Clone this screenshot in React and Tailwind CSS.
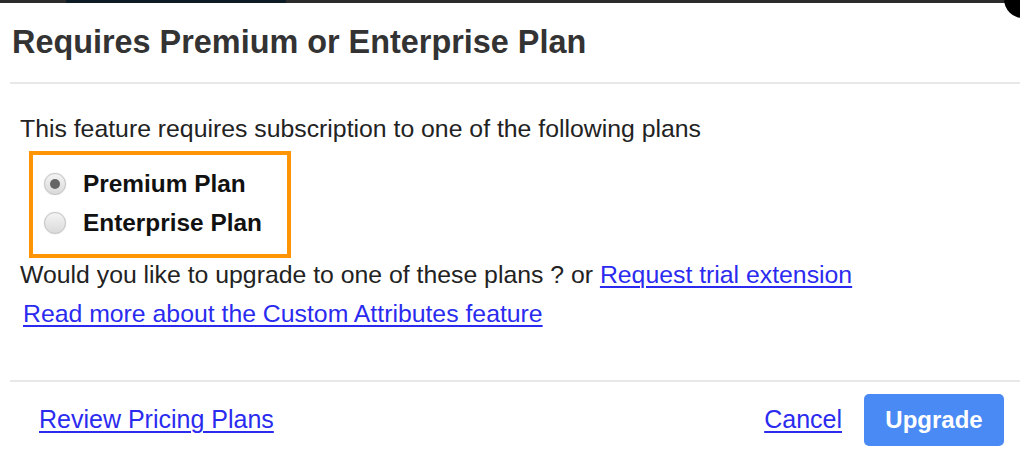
import React, { useState } from "react";

const links = "text-[#2b2bef] underline underline-offset-[3px] decoration-[1.5px]";

const App = () => {
  const [plan, setPlan] = useState("premium");

  return (
    <div className="relative w-[1020px] h-[465px] overflow-hidden bg-white font-['Liberation_Sans',Arial,sans-serif] text-[#222]">
      {/* strip of the page behind the dialog */}
      <div className="flex h-[3px]">
        <div className="w-[66px] bg-[#2b2b2b]" />
        <div className="w-[220px] bg-[#0d1b24]" />
        <div className="flex-1 bg-[#2b2b2b]" />
      </div>
      <div className="absolute -right-[22px] -top-[20px] w-[38px] h-[38px] rounded-full bg-black" />

      <div className="flex h-[79px] items-center pl-[12px]">
        <h1 className="text-[32.4px] font-bold text-[#333]">
          Requires Premium or Enterprise Plan
        </h1>
      </div>
      <div className="ml-[10px] h-[2px] bg-[#e8e8e8]" />

      <div className="pl-[20px] pt-[31px] text-[24.8px] leading-[28px]">
        <p>This feature requires subscription to one of the following plans</p>

        <div className="mt-[8px] ml-[9px] w-[262px] border-4 border-[#ff9505] pl-[11px] pt-[15px] pb-[17px] flex flex-col gap-[11px]">
          {[
            ["premium", "Premium Plan"],
            ["enterprise", "Enterprise Plan"],
          ].map(([key, label]) => (
            <label key={key} className="flex items-center gap-[17px] text-[24.4px] font-bold text-[#111] cursor-pointer">
              <span
                onClick={() => setPlan(key)}
                className="flex w-[22px] h-[22px] items-center justify-center rounded-full border border-[#c4c4c4] bg-gradient-to-b from-[#f4f4f4] to-[#dadada] shadow-[0_0_1px_#bbb]"
              >
                {plan === key && <span className="w-[10px] h-[10px] rounded-full bg-[#666]" />}
              </span>
              {label}
            </label>
          ))}
        </div>

        <p className="mt-[3px]">
          Would you like to upgrade to one of these plans ? or{" "}
          <a href="#" className={links}>Request trial extension</a>
        </p>
        <p className="mt-[11px] pl-[3px]">
          <a href="#" className={links}>Read more about the Custom Attributes feature</a>
        </p>
      </div>

      <div className="ml-[10px] mt-[52px] h-[2px] bg-[#e8e8e8]" />

      <div className="flex items-center justify-between pl-[39px] pr-[16px] pt-[12px] text-[25px]">
        <a href="#" className={links}>Review Pricing Plans</a>
        <div className="flex items-center gap-[22px]">
          <a href="#" className={links}>Cancel</a>
          <button className="w-[140px] h-[52px] rounded-[5px] bg-[#4a8af4] text-white font-bold text-[24px]">
            Upgrade
          </button>
        </div>
      </div>
    </div>
  );
};

export default App;
